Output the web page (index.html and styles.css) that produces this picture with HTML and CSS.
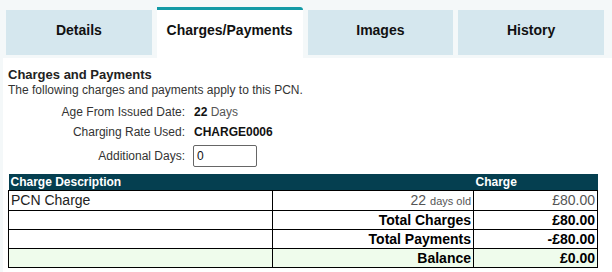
FILE: index.html
```html
<!DOCTYPE html>
<html lang="en">
<head>
    <meta charset="UTF-8" />
    <title>PCN Charges</title>
    <link rel="stylesheet" href="styles.css">
</head>
<body>
    <nav class="tabs">
        <a class="tab" href="#details">Details</a>
        <a class="tab active" href="#charges">Charges/Payments</a>
        <a class="tab" href="#images">Images</a>
        <a class="tab" href="#history">History</a>
    </nav>
    <main class="panel" id="charges">
        <h2>Charges and Payments</h2>
        <p class="intro">The following charges and payments apply to this PCN.</p>
        <dl class="facts">
            <dt>Age From Issued Date:</dt>
            <dd><strong>22</strong> <span class="muted">Days</span></dd>
            <dt>Charging Rate Used:</dt>
            <dd><strong>CHARGE0006</strong></dd>
            <dt class="tall">Additional Days:</dt>
            <dd class="tall"><input type="text" value="0" /></dd>
        </dl>
        <table class="charges">
            <colgroup>
                <col class="col-desc" />
                <col class="col-note" />
                <col class="col-amount" />
            </colgroup>
            <thead>
                <tr>
                    <th colspan="2">Charge Description</th>
                    <th>Charge</th>
                </tr>
            </thead>
            <tbody>
                <tr>
                    <td class="desc">PCN Charge</td>
                    <td class="num muted">22 <small>days old</small></td>
                    <td class="num muted">£80.00</td>
                </tr>
                <tr class="total">
                    <td></td>
                    <td class="num">Total Charges</td>
                    <td class="num">£80.00</td>
                </tr>
                <tr class="total">
                    <td></td>
                    <td class="num">Total Payments</td>
                    <td class="num">-£80.00</td>
                </tr>
                <tr class="total balance">
                    <td></td>
                    <td class="num">Balance</td>
                    <td class="num">£0.00</td>
                </tr>
            </tbody>
        </table>
    </main>
</body>
</html>
```

FILE: styles.css
```css
html {
    font: 12px/1.2 "Liberation Sans", Arial, sans-serif;
}

body {
    margin: 0;
    padding: 0;
    background-color: #f4f8f9;
    color: #222;
}

.tabs {
    display: grid;
    grid-template-columns: repeat(4, 1fr);
    column-gap: 5px;
    align-items: start;
    padding: 7px 8px 0 6px;
    height: 51px;
}

.tab {
    display: flex;
    justify-content: center;
    align-items: center;
    box-sizing: border-box;
    margin-top: 3px;
    padding-bottom: 5px;
    height: 45px;
    background-color: #d5e7ee;
    color: #111;
    font-size: 14px;
    font-weight: bold;
    text-decoration: none;
}

.tab.active {
    margin-top: 0;
    padding-bottom: 7px;
    height: 51px;
    border-top: 3px solid #129aa6;
    border-top-right-radius: 3px;
    background-color: #fff;
}

.panel {
    margin-left: 3px;
    padding: 9px 0 6px 5px;
    background-color: #fff;
    min-height: 200px;
}

h2 {
    margin: 0;
    font-size: 13px;
    color: #222;
}

.intro {
    margin: 0;
    color: #333;
}

.facts {
    display: grid;
    grid-template-columns: 177px auto;
    column-gap: 9px;
    row-gap: 6px;
    margin: 8px 0 7px;
    color: #333;
}

.facts dt {
    text-align: right;
    line-height: 14px;
}

.facts dd {
    margin: 0;
    line-height: 14px;
    color: #111;
}

.facts .tall {
    line-height: 22px;
}

.facts dd.tall {
    margin-left: -1px;
}

.facts input {
    box-sizing: border-box;
    width: 64px;
    height: 22px;
    padding: 0 3px;
    border: 1px solid #666;
    border-radius: 2px;
    font: 12px "Liberation Sans", Arial, sans-serif;
    color: #111;
    vertical-align: top;
}

.muted {
    color: #555;
}

table.charges {
    border-collapse: collapse;
    width: 590px;
    table-layout: fixed;
}

.col-desc {
    width: 264px;
}

.col-note {
    width: 201px;
}

.charges th {
    padding: 1px 2px;
    background-color: #053f50;
    color: #fff;
    font-size: 12px;
    text-align: left;
    line-height: 14px;
}

.charges td {
    padding: 0 2px;
    border: 1px solid #000;
    font-size: 14px;
    line-height: 18px;
}

.charges .desc {
    color: #222;
}

.charges .num {
    text-align: right;
}

.charges small {
    font-size: 11px;
}

.charges .total td {
    font-weight: bold;
    color: #000;
}

.charges .balance td {
    background-color: #effcec;
}
```
